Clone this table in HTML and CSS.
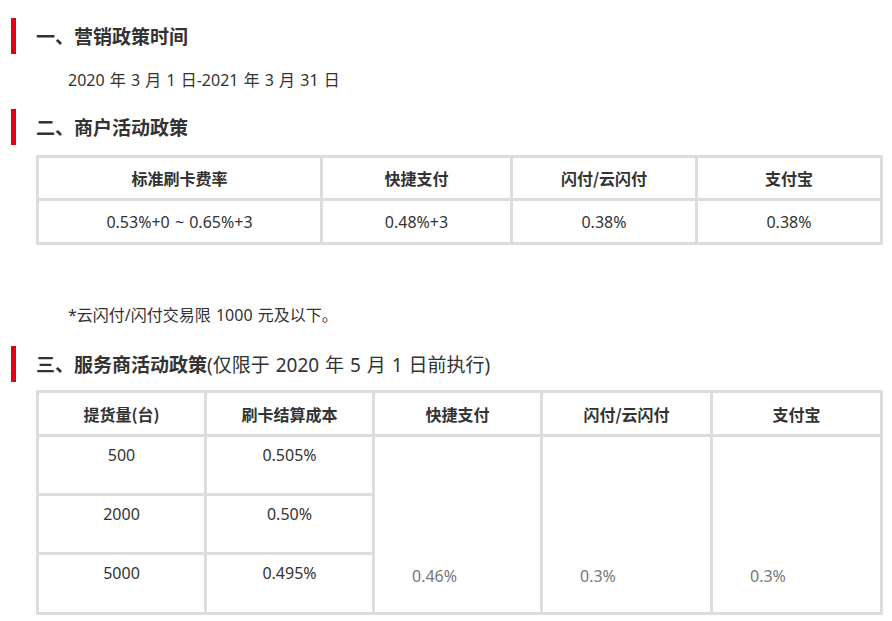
FILE: index.html
```html
<!DOCTYPE html>
<html lang="zh-CN">
<head>
<meta charset="utf-8">
<title>政策</title>
<link rel="stylesheet" href="styles.css">
</head>
<body>
<div class="page">
  <h2 class="sec">一、营销政策时间</h2>
  <p class="para date">2020 年 3 月 1 日-2021 年 3 月 31 日</p>
  <h2 class="sec sec2">二、商户活动政策</h2>
  <table class="grid t1">
    <colgroup><col class="c284"><col class="c190"><col class="c185"><col class="c185"></colgroup>
    <tr class="h43"><th>标准刷卡费率</th><th>快捷支付</th><th>闪付/云闪付</th><th>支付宝</th></tr>
    <tr class="h44"><td>0.53%+0 ~ 0.65%+3</td><td>0.48%+3</td><td>0.38%</td><td>0.38%</td></tr>
  </table>
  <p class="para note">*云闪付/闪付交易限 1000 元及以下。</p>
  <h2 class="sec sec3">三、服务商活动政策<span class="light">(仅限于 2020 年 5 月 1 日前执行)</span></h2>
  <table class="grid t2">
    <colgroup><col class="c168"><col class="c168"><col class="c168"><col class="c170"><col class="c170"></colgroup>
    <tr class="h44"><th>提货量(台)</th><th>刷卡结算成本</th><th>快捷支付</th><th>闪付/云闪付</th><th>支付宝</th></tr>
    <tr class="h59"><td class="top">500</td><td class="top">0.505%</td><td class="merged" rowspan="3">0.46%</td><td class="merged" rowspan="3">0.3%</td><td class="merged" rowspan="3">0.3%</td></tr>
    <tr class="h59"><td class="top">2000</td><td class="top">0.50%</td></tr>
    <tr class="h60"><td class="top">5000</td><td class="top">0.495%</td></tr>
  </table>
</div>
</body>
</html>
```

FILE: styles.css
```css
html, body {
  margin: 0;
  padding: 0;
  background: #fff;
}
body {
  font-family: "Noto Sans", "Noto Sans CJK SC", sans-serif;
  color: #333;
  word-spacing: 1px;
}
.page {
  padding: 18px 0 0 11px;
}
.sec {
  margin: 0;
  height: 36px;
  line-height: 36px;
  border-left: 5px solid #e60012;
  padding-left: 20px;
  font-size: 19px;
  font-weight: bold;
  color: #333;
  font-family: "Noto Sans CJK SC", "Noto Sans", sans-serif;
}
.sec .light {
  font-weight: normal;
  font-family: "Noto Sans", "Noto Sans CJK SC", sans-serif;
}
.para {
  margin: 0;
  padding-left: 57px;
  font-size: 16px;
  line-height: 24px;
  color: #333;
}
.date {
  margin-top: 14px;
}
.sec2 {
  margin-top: 17px;
}
.grid {
  border-collapse: collapse;
  table-layout: fixed;
  margin-left: 25px;
  font-size: 16px;
  color: #333;
}
.t1 {
  width: 844px;
  margin-top: 10px;
}
.t2 {
  width: 844px;
  margin-top: 8px;
}
.grid th, .grid td {
  border: 3px solid #dddddd;
  text-align: center;
  vertical-align: middle;
  padding: 0;
  line-height: 24px;
}
.grid th {
  font-weight: bold;
  font-family: "Noto Sans CJK SC", "Noto Sans", sans-serif;
}
.grid td.top {
  vertical-align: top;
  padding-top: 6px;
}
.grid td.merged {
  vertical-align: bottom;
  text-align: left;
  padding: 0 0 24px 37px;
  color: #777;
}
.c284 { width: 284px; }
.c190 { width: 190px; }
.c185 { width: 185px; }
.c168 { width: 168px; }
.c170 { width: 170px; }
.h43 { height: 43px; }
.h44 { height: 44px; }
.h59 { height: 59px; }
.h60 { height: 60px; }
.note {
  margin-top: 58px;
}
.sec3 {
  margin-top: 19px;
}
```
